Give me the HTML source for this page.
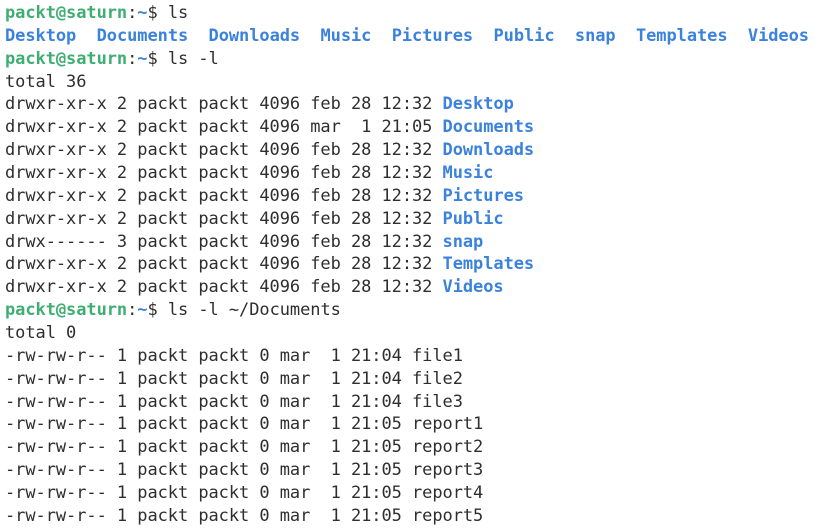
<!DOCTYPE html>
<html><head><meta charset="utf-8"><style>
html,body{margin:0;padding:0;background:#fff;width:814px;height:525px;overflow:hidden}
pre{margin:0;position:absolute;left:5px;top:2px;font-family:"DejaVu Sans Mono","Liberation Mono",monospace;font-size:17px;letter-spacing:-0.06px;line-height:22.86px;color:#2e2e2e}
.g{color:#3fae72;font-weight:bold}
.b{color:#3b82dd;font-weight:bold}
.bl{color:#3b82dd;font-weight:bold}
</style></head><body>
<pre><span class="g">packt@saturn</span>:<span class="bl">~</span>$ ls
<span class="b">Desktop</span>  <span class="b">Documents</span>  <span class="b">Downloads</span>  <span class="b">Music</span>  <span class="b">Pictures</span>  <span class="b">Public</span>  <span class="b">snap</span>  <span class="b">Templates</span>  <span class="b">Videos</span>
<span class="g">packt@saturn</span>:<span class="bl">~</span>$ ls -l
total 36
drwxr-xr-x 2 packt packt 4096 feb 28 12:32 <span class="b">Desktop</span>
drwxr-xr-x 2 packt packt 4096 mar  1 21:05 <span class="b">Documents</span>
drwxr-xr-x 2 packt packt 4096 feb 28 12:32 <span class="b">Downloads</span>
drwxr-xr-x 2 packt packt 4096 feb 28 12:32 <span class="b">Music</span>
drwxr-xr-x 2 packt packt 4096 feb 28 12:32 <span class="b">Pictures</span>
drwxr-xr-x 2 packt packt 4096 feb 28 12:32 <span class="b">Public</span>
drwx------ 3 packt packt 4096 feb 28 12:32 <span class="b">snap</span>
drwxr-xr-x 2 packt packt 4096 feb 28 12:32 <span class="b">Templates</span>
drwxr-xr-x 2 packt packt 4096 feb 28 12:32 <span class="b">Videos</span>
<span class="g">packt@saturn</span>:<span class="bl">~</span>$ ls -l ~/Documents
total 0
-rw-rw-r-- 1 packt packt 0 mar  1 21:04 file1
-rw-rw-r-- 1 packt packt 0 mar  1 21:04 file2
-rw-rw-r-- 1 packt packt 0 mar  1 21:04 file3
-rw-rw-r-- 1 packt packt 0 mar  1 21:05 report1
-rw-rw-r-- 1 packt packt 0 mar  1 21:05 report2
-rw-rw-r-- 1 packt packt 0 mar  1 21:05 report3
-rw-rw-r-- 1 packt packt 0 mar  1 21:05 report4
-rw-rw-r-- 1 packt packt 0 mar  1 21:05 report5</pre>
</body></html>
